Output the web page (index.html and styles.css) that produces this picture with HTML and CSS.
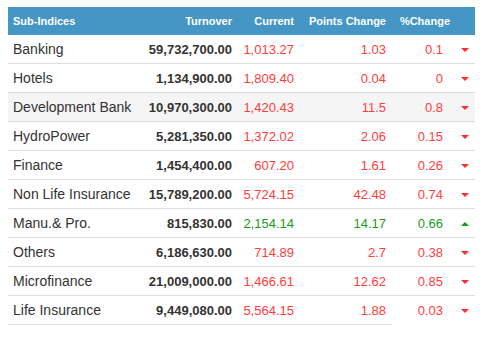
FILE: index.html
```html
<!DOCTYPE html>
<html>
<head>
<meta charset="utf-8">
<link rel="stylesheet" href="styles.css">
</head>
<body>
<table class="indices">
  <colgroup>
    <col class="c-name"><col class="c-turn"><col class="c-cur"><col class="c-pts"><col class="c-pct"><col class="c-arr">
  </colgroup>
  <thead>
    <tr>
      <th class="left">Sub-Indices</th>
      <th>Turnover</th>
      <th>Current</th>
      <th>Points Change</th>
      <th>%Change</th>
      <th></th>
    </tr>
  </thead>
  <tbody>
    <tr><td class="name">Banking</td><td class="turn">59,732,700.00</td><td class="down">1,013.27</td><td class="down">1.03</td><td class="down pct">0.1</td><td class="arr"><span class="tri-down"></span></td></tr>
    <tr><td class="name">Hotels</td><td class="turn">1,134,900.00</td><td class="down">1,809.40</td><td class="down">0.04</td><td class="down pct">0</td><td class="arr"><span class="tri-down"></span></td></tr>
    <tr class="hl"><td class="name">Development Bank</td><td class="turn">10,970,300.00</td><td class="down">1,420.43</td><td class="down">11.5</td><td class="down pct">0.8</td><td class="arr"><span class="tri-down"></span></td></tr>
    <tr><td class="name">HydroPower</td><td class="turn">5,281,350.00</td><td class="down">1,372.02</td><td class="down">2.06</td><td class="down pct">0.15</td><td class="arr"><span class="tri-down"></span></td></tr>
    <tr><td class="name">Finance</td><td class="turn">1,454,400.00</td><td class="down">607.20</td><td class="down">1.61</td><td class="down pct">0.26</td><td class="arr"><span class="tri-down"></span></td></tr>
    <tr><td class="name">Non Life Insurance</td><td class="turn">15,789,200.00</td><td class="down">5,724.15</td><td class="down">42.48</td><td class="down pct">0.74</td><td class="arr"><span class="tri-down"></span></td></tr>
    <tr><td class="name">Manu.&amp; Pro.</td><td class="turn">815,830.00</td><td class="up">2,154.14</td><td class="up">14.17</td><td class="up pct">0.66</td><td class="arr"><span class="tri-up"></span></td></tr>
    <tr><td class="name">Others</td><td class="turn">6,186,630.00</td><td class="down">714.89</td><td class="down">2.7</td><td class="down pct">0.38</td><td class="arr"><span class="tri-down"></span></td></tr>
    <tr><td class="name">Microfinance</td><td class="turn">21,009,000.00</td><td class="down">1,466.61</td><td class="down">12.62</td><td class="down pct">0.85</td><td class="arr"><span class="tri-down"></span></td></tr>
    <tr class="last"><td class="name">Life Insurance</td><td class="turn">9,449,080.00</td><td class="down">5,564.15</td><td class="down">1.88</td><td class="down pct">0.03</td><td class="arr"><span class="tri-down"></span></td></tr>
  </tbody>
</table>
</body>
</html>
```
FILE: styles.css
```css
body {
  margin: 7px 0 0 8px;
  background: #fff;
  font-family: "Liberation Sans", Arial, sans-serif;
}
.indices {
  width: 467px;
  table-layout: fixed;
  border-collapse: collapse;
  border-spacing: 0;
}
.c-name { width: 132px; }
.c-turn { width: 98px; }
.c-cur { width: 62px; }
.c-pts { width: 92px; }
.c-pct { width: 64px; }
.c-arr { width: 19px; }
.indices th {
  background: #4596c4;
  color: #fff;
  font-size: 11px;
  font-weight: bold;
  height: 28px;
  padding: 0 6px 0 5px;
  text-align: right;
  white-space: nowrap;
}
.indices th.left { text-align: left; }
.indices td {
  height: 28px;
  padding: 0 6px 0 5px;
  font-size: 13px;
  text-align: right;
  border-bottom: 1px solid #dddddd;
  white-space: nowrap;
  color: #333;
}
.indices td.name {
  text-align: left;
  font-size: 14px;
  color: #333;
}
.indices td.turn { font-weight: bold; color: #333; }
.indices td.down { color: #ff3d3d; }
.indices td.up { color: #1c9a1c; }
.indices td.pct { padding-right: 13px; }
.indices td.arr {
  padding: 0 0 0 5px;
  text-align: left;
}
.hl td { background: #f5f5f5; }
.last td.pct, .last td.arr { border-bottom: none; }
.tri-down, .tri-up {
  display: block;
  width: 0;
  height: 0;
  border-left: 4px solid transparent;
  border-right: 4px solid transparent;
  margin-top: 2px;
}
.tri-down { border-top: 4px solid #ff2f2f; }
.tri-up { border-bottom: 4px solid #0fa30f; }
```
